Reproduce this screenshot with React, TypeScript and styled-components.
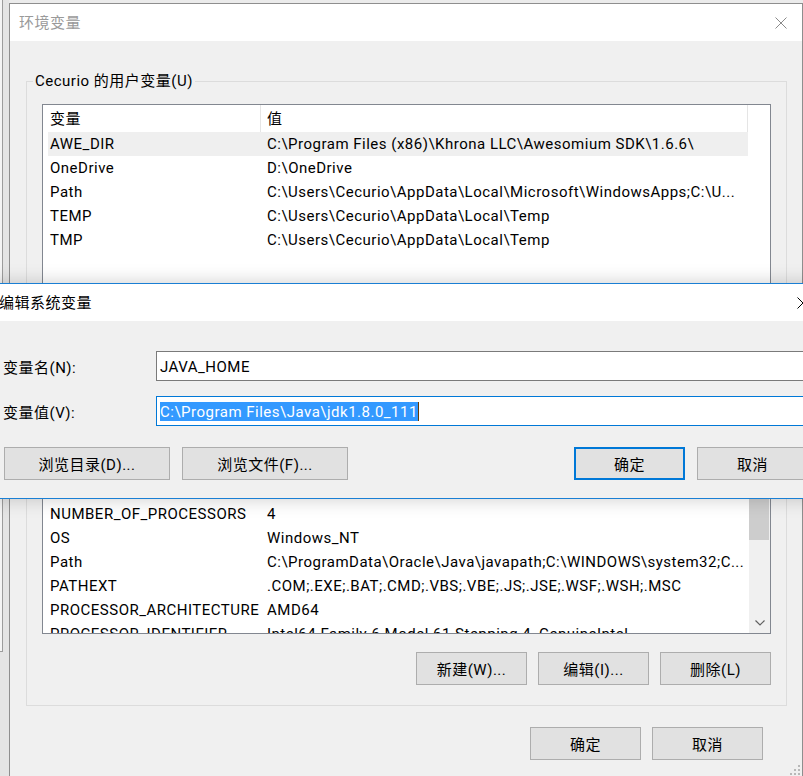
import React from "react";
import styled, { createGlobalStyle } from "styled-components";

const GlobalStyle = createGlobalStyle`
  html, body { margin: 0; padding: 0; background: #ebebeb; }
  body {
    font-family: Roboto, "Noto Sans CJK SC", sans-serif;
    font-size: 15px;
    letter-spacing: 0.5px;
    color: #000;
  }
  * { box-sizing: border-box; }
`;

const Desktop = styled.div`
  position: relative;
  width: 803px;
  height: 776px;
  overflow: hidden;
  display: flex;
  align-items: flex-start;
  background: #ebebeb;
`;

const LeftStrip = styled.div`
  width: 9px;
  height: 776px;
  flex-shrink: 0;
  background: #e4e4e4;
`;

const BackEdge = styled.div`
  width: 3px;
  height: 652px;
  background: #f4f4f4;
  border-right: 1px solid #9c9c9c;
  border-bottom: 1px solid #9c9c9c;
`;

const MainDialog = styled.div`
  position: relative;
  margin-top: 3px;
  width: 794px;
  flex-shrink: 0;
  border: 1px solid #8e8e8e;
  background: #f0f0f0;
`;

const TitleBar = styled.div<{ $active?: boolean; $padLeft: number }>`
  height: 37px;
  background: #fff;
  display: flex;
  align-items: center;
  justify-content: space-between;
  padding: 1px 15px 0 ${(p) => p.$padLeft}px;
  color: ${(p) => (p.$active ? "#000" : "#9a9a9a")};
  line-height: 36px;
  white-space: nowrap;
`;

const Body = styled.div`
  padding: 30px 15px 17px 16px;
  display: flex;
  flex-direction: column;
`;

const Group = styled.fieldset<{ $gapTop?: number }>`
  margin: ${(p) => p.$gapTop ?? 0}px 0 0 0;
  padding: 0;
  border: 1px solid #dcdcdc;
  min-width: 0;
`;

const Legend = styled.legend`
  margin-left: 6px;
  padding: 1px 2px 0;
  line-height: 19px;
  height: 20px;
  white-space: nowrap;
`;

const GroupContent = styled.div`
  padding: 13px 15px 20px 15px;
  display: flex;
  flex-direction: column;
`;

const ListBox = styled.div<{ $height: number }>`
  height: ${(p) => p.$height}px;
  border: 1px solid #828790;
  background: #fff;
  display: flex;
  overflow: hidden;
`;

const ListPane = styled.div`
  flex: 1;
  min-width: 0;
  padding-left: 5px;
  display: flex;
  flex-direction: column;
`;

const HeaderRow = styled.div`
  display: flex;
  width: 700px;
  height: 27px;
  flex-shrink: 0;
  line-height: 28px;
`;

const HeaderCell = styled.div<{ $w: number; $pad: number }>`
  width: ${(p) => p.$w}px;
  padding-left: ${(p) => p.$pad}px;
  border-right: 1px solid #e5e5e5;
  white-space: nowrap;
  overflow: hidden;
`;

const Row = styled.div<{ $selected?: boolean }>`
  display: flex;
  width: 700px;
  height: 24px;
  flex-shrink: 0;
  line-height: 25px;
  background: ${(p) => (p.$selected ? "#efefef" : "transparent")};
`;

const Cell = styled.div<{ $w: number; $pad: number }>`
  width: ${(p) => p.$w}px;
  padding-left: ${(p) => p.$pad}px;
  white-space: nowrap;
  overflow: hidden;
  flex-shrink: 0;
`;

const Scrollbar = styled.div`
  width: 21px;
  margin-left: 1px;
  flex-shrink: 0;
  background: #f0f0f0;
  display: flex;
  flex-direction: column;
`;

const ScrollArrow = styled.div`
  height: 21px;
  flex-shrink: 0;
  display: flex;
  align-items: center;
  justify-content: center;
`;

const ScrollThumb = styled.div`
  height: 92px;
  margin-right: 1px;
  background: #cdcdcd;
  flex-shrink: 0;
`;

const ScrollTrack = styled.div`
  flex: 1;
`;

const ButtonRow = styled.div<{ $top: number; $right?: number; $gap: number }>`
  display: flex;
  justify-content: flex-end;
  gap: ${(p) => p.$gap}px;
  margin-top: ${(p) => p.$top}px;
  padding-right: ${(p) => p.$right ?? 0}px;
`;

const Button = styled.button<{ $w: number; $default?: boolean }>`
  width: ${(p) => p.$w}px;
  height: 33px;
  flex-shrink: 0;
  padding: 0;
  font: inherit;
  letter-spacing: inherit;
  color: #000;
  background: #e1e1e1;
  border: ${(p) => (p.$default ? "2px solid #0078d7" : "1px solid #adadad")};
  white-space: nowrap;
`;

const Grip = styled.div`
  position: absolute;
  right: 1px;
  bottom: 1px;
  width: 12px;
  height: 12px;
  display: flex;
`;

/* overlay edit dialog */
const EditDialog = styled.div`
  position: absolute;
  left: -9px;
  top: 283px;
  width: 834px;
  border: 1px solid #1a7fd4;
  background: #f0f0f0;
  box-shadow: 0 0 18px rgba(0, 0, 0, 0.2);
`;

const EditBody = styled.div`
  padding: 30px 16px 18px 11px;
  display: flex;
  flex-direction: column;
`;

const FieldRow = styled.div<{ $top?: number }>`
  display: flex;
  align-items: center;
  height: 30px;
  margin-top: ${(p) => p.$top ?? 0}px;
`;

const FieldLabel = styled.div`
  width: 153px;
  flex-shrink: 0;
  white-space: nowrap;
`;

const Field = styled.div<{ $focused?: boolean }>`
  flex: 1;
  height: 30px;
  border: 1px solid ${(p) => (p.$focused ? "#0078d7" : "#7a7a7a")};
  background: #fff;
  padding: 1px 3px 0;
  line-height: 28px;
  white-space: nowrap;
  overflow: hidden;
  display: flex;
  align-items: center;
`;

const Selection = styled.span`
  display: inline-block;
  background: #3399ff;
  color: #fff;
  line-height: 20px;
  height: 19px;
  border-right: 1px solid #6b3a00;
`;

const EditButtons = styled.div`
  display: flex;
  gap: 12px;
  margin-top: 21px;
  padding-left: 1px;
`;

const Spacer = styled.div`
  flex: 1;
`;

const CloseIcon = ({ color }: { color: string }) => (
  <svg width="12" height="12" viewBox="0 0 12 12" style={{ flexShrink: 0 }}>
    <path d="M0.5 0.5 L11.5 11.5 M11.5 0.5 L0.5 11.5" stroke={color} strokeWidth="1" fill="none" />
  </svg>
);

const Chevron = ({ up }: { up?: boolean }) => (
  <svg width="10" height="6" viewBox="0 0 10 6">
    <polyline
      points={up ? "0.5,5.5 5,1 9.5,5.5" : "0.5,0.5 5,5 9.5,0.5"}
      stroke="#606060"
      strokeWidth="1.2"
      fill="none"
    />
  </svg>
);

type Item = { name: string; value: string; selected?: boolean };

const userVars: Item[] = [
  { name: "AWE_DIR", value: "C:\\Program Files (x86)\\Khrona LLC\\Awesomium SDK\\1.6.6\\", selected: true },
  { name: "OneDrive", value: "D:\\OneDrive" },
  { name: "Path", value: "C:\\Users\\Cecurio\\AppData\\Local\\Microsoft\\WindowsApps;C:\\U..." },
  { name: "TEMP", value: "C:\\Users\\Cecurio\\AppData\\Local\\Temp" },
  { name: "TMP", value: "C:\\Users\\Cecurio\\AppData\\Local\\Temp" },
];

const sysVars: Item[] = [
  { name: "ComSpec", value: "C:\\WINDOWS\\system32\\cmd.exe" },
  { name: "JAVA_HOME", value: "C:\\Program Files\\Java\\jdk1.8.0_111" },
  { name: "NUMBER_OF_PROCESSORS", value: "4" },
  { name: "OS", value: "Windows_NT" },
  { name: "Path", value: "C:\\ProgramData\\Oracle\\Java\\javapath;C:\\WINDOWS\\system32;C..." },
  { name: "PATHEXT", value: ".COM;.EXE;.BAT;.CMD;.VBS;.VBE;.JS;.JSE;.WSF;.WSH;.MSC" },
  { name: "PROCESSOR_ARCHITECTURE", value: "AMD64" },
  { name: "PROCESSOR_IDENTIFIER", value: "Intel64 Family 6 Model 61 Stepping 4, GenuineIntel" },
  { name: "PROCESSOR_LEVEL", value: "6" },
];

const VarList = ({ items, height, scroll }: { items: Item[]; height: number; scroll?: boolean }) => (
  <ListBox $height={height}>
    <ListPane>
      <HeaderRow>
        <HeaderCell $w={213} $pad={2}>变量</HeaderCell>
        <HeaderCell $w={487} $pad={6}>值</HeaderCell>
      </HeaderRow>
      {items.map((it) => (
        <Row key={it.name} $selected={it.selected}>
          <Cell $w={213} $pad={2}>{it.name}</Cell>
          <Cell $w={487} $pad={6}>{it.value}</Cell>
        </Row>
      ))}
    </ListPane>
    {scroll && (
      <Scrollbar>
        <ScrollArrow>
          <Chevron up />
        </ScrollArrow>
        <ScrollThumb />
        <ScrollTrack />
        <ScrollArrow>
          <Chevron />
        </ScrollArrow>
      </Scrollbar>
    )}
  </ListBox>
);

export default function App() {
  return (
    <>
      <GlobalStyle />
      <Desktop>
        <LeftStrip>
          <BackEdge />
        </LeftStrip>
        <MainDialog>
          <TitleBar $padLeft={9}>
            <span>环境变量</span>
            <CloseIcon color="#8a8a8a" />
          </TitleBar>
          <Body>
            <Group>
              <Legend>Cecurio 的用户变量(U)</Legend>
              <GroupContent>
                <VarList items={userVars} height={205} />
                <ButtonRow $top={18} $gap={11}>
                  <Button $w={111}>新建(N)...</Button>
                  <Button $w={111}>编辑(E)...</Button>
                  <Button $w={111}>删除(D)</Button>
                </ButtonRow>
              </GroupContent>
            </Group>
            <Group $gapTop={12}>
              <Legend>系统变量(S)</Legend>
              <GroupContent>
                <VarList items={sysVars} height={208} scroll />
                <ButtonRow $top={18} $gap={11}>
                  <Button $w={111}>新建(W)...</Button>
                  <Button $w={111}>编辑(I)...</Button>
                  <Button $w={111}>删除(L)</Button>
                </ButtonRow>
              </GroupContent>
            </Group>
            <ButtonRow $top={21} $right={24} $gap={11}>
              <Button $w={111}>确定</Button>
              <Button $w={111}>取消</Button>
            </ButtonRow>
          </Body>
          <Grip>
            <svg width="12" height="12" viewBox="0 0 12 12">
              {[
                [9, 1],
                [5, 5],
                [9, 5],
                [1, 9],
                [5, 9],
                [9, 9],
              ].map(([x, y]) => (
                <rect key={`${x}-${y}`} x={x} y={y} width="2" height="2" fill="#b8b8b8" />
              ))}
            </svg>
          </Grip>
        </MainDialog>

        <EditDialog>
          <TitleBar $active $padLeft={7}>
            <span>编辑系统变量</span>
            <CloseIcon color="#000" />
          </TitleBar>
          <EditBody>
            <FieldRow>
              <FieldLabel>变量名(N):</FieldLabel>
              <Field>JAVA_HOME</Field>
            </FieldRow>
            <FieldRow $top={15}>
              <FieldLabel>变量值(V):</FieldLabel>
              <Field $focused>
                <Selection>C:\Program Files\Java\jdk1.8.0_111</Selection>
              </Field>
            </FieldRow>
            <EditButtons>
              <Button $w={166}>浏览目录(D)...</Button>
              <Button $w={166}>浏览文件(F)...</Button>
              <Spacer />
              <Button $w={111} $default>确定</Button>
              <Button $w={111}>取消</Button>
            </EditButtons>
          </EditBody>
        </EditDialog>
      </Desktop>
    </>
  );
}
